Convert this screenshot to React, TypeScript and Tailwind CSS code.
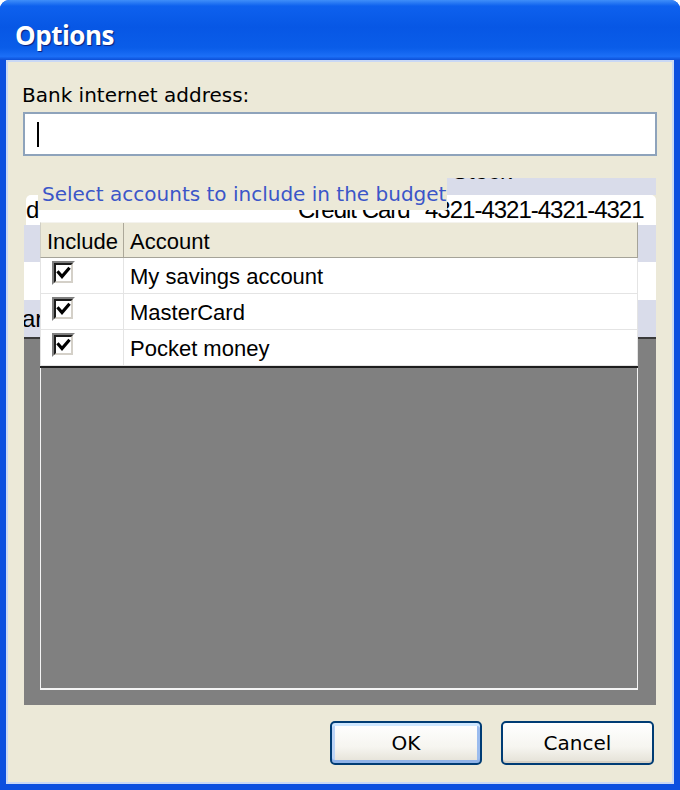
const ui = "font-['DejaVu_Sans',Verdana,sans-serif]";
const cell = "font-['Liberation_Sans',Arial,sans-serif]";

function Check() {
  return (
    <span className="flex h-[24px] w-[23px] border-2 border-t-[#808080] border-l-[#808080] border-b-white border-r-white">
      <span className="flex flex-1 bg-white border-2 border-t-[#1c1c1c] border-l-[#1c1c1c] border-b-[#d4d0c8] border-r-[#d4d0c8]">
        <svg viewBox="0 0 15 16" className="h-full w-full" aria-hidden>
          <path d="M2.5 7.5 L6 11.5 L12.5 4" fill="none" stroke="#000" strokeWidth="3.2" strokeLinecap="square" />
        </svg>
      </span>
    </span>
  );
}

const accounts = ["My savings account", "MasterCard", "Pocket money"];

export default function App() {
  return (
    <div className="flex h-[790px] w-[680px] flex-col overflow-hidden rounded-t-[9px] bg-[#0c4fdf]">
      {/* Title bar */}
      <div className="h-[60px] shrink-0 bg-[linear-gradient(180deg,#3f8ef9_0%,#0e61ee_10%,#0757e5_45%,#0a5de9_80%,#1c6ff7_94%,#0c4fd8_100%)] pl-[15px] pt-[17px]">
        <div className="font-['Open_Sans',sans-serif] text-[26px] font-bold leading-[36px] tracking-[-0.5px] text-white [text-shadow:1px_1px_1px_#0a1f7a]">
          Options
        </div>
      </div>

      {/* Client area */}
      <div className={`mx-[6px] mb-[6px] flex flex-1 flex-col border-2 border-[#c9d8f5] bg-[#ece9d8] ${ui}`}>
        <div className="pl-[14px] pt-[21px] text-[20px] leading-[24px] text-black">Bank internet address:</div>
        <div className="mx-[15px] mt-[5px] h-[44px] border-2 border-[#8ea3bb] bg-white pl-[12px] pt-[8px]">
          <div className="h-[25px] w-[2px] bg-black" />
        </div>

        {/* Account grid area */}
        <div className={`relative mx-[16px] mt-[22px] h-[527px] ${cell}`}>
          {/* grid behind */}
          <div className="flex h-full flex-col text-black">
            <div className="ml-[14px] h-[17px] overflow-hidden bg-[#d9dcea]">
              <div className="-mt-[20px] pl-[414px] text-[24px] leading-[26px]">Stock</div>
            </div>
            <div className="ml-[2px] flex h-[30px] overflow-hidden rounded-t-[5px] bg-white pt-[1px] text-[24px] leading-[28px] tracking-[-1px]">
              <span className="w-[272px] shrink-0">d</span>
              <span className="w-[127px] shrink-0">Credit Card</span>
              <span className="whitespace-nowrap">4321-4321-4321-4321</span>
            </div>
            <div className="h-[37px] bg-[#d9dcea]" />
            <div className="h-[38px] bg-white" />
            <div className="h-[37px] overflow-hidden bg-[#d9dcea] pt-[6px] text-[24px] leading-[26px]">
              <span className="-ml-[2px]">ar</span>
            </div>
            <div className="flex-1 border-t-2 border-[#3a3a3a] bg-[#808080]" />
          </div>

          {/* group label over it */}
          <div className={`absolute left-[14px] top-0 h-[32px] w-[409px] bg-[#ece9d8] pl-[4px] text-[20px] leading-[32px] text-[#3b56c8] ${ui}`}>
            Select accounts to include in the budget
          </div>

          {/* budget grid */}
          <div className="absolute left-[16px] top-[44px] flex h-[468px] w-[598px] flex-col text-[22px] text-black">
            <div className="flex h-[36px] border border-b-[#a5a398] border-l-[#d0cfc6] border-r-[#a5a398] border-t-[#f4f3ee] bg-[#ece9d8] leading-[38px]">
              <div className="w-[83px] shrink-0 border-r border-[#aca899] pl-[6px]">Include</div>
              <div className="pl-[6px]">Account</div>
            </div>
            {accounts.map((name) => (
              <div key={name} className="flex h-[36px] border-b border-x border-[#e4e4e4] bg-white">
                <div className="flex w-[83px] shrink-0 items-center border-r border-[#e4e4e4] pb-[5px] pl-[11px]">
                  <Check />
                </div>
                <div className="pl-[6px] leading-[38px]">{name}</div>
              </div>
            ))}
            <div className="h-[2px] bg-[#1e1e1e]" />
            <div className="flex-1 border-x border-b-2 border-[#f4f4f4] bg-[#808080]" />
          </div>
        </div>

        {/* Buttons */}
        <div className="mt-[16px] flex justify-end gap-[19px] pr-[18px]">
          <button className="h-[44px] w-[152px] rounded-[5px] border-2 border-[#003c74] bg-[linear-gradient(180deg,#ffffff_0%,#f6f5f0_60%,#e4e1d6_100%)] text-[20px] text-black shadow-[inset_0_3px_0_#cee7ff,inset_0_-3px_0_#8fb2e8,inset_3px_0_0_#bcd4f6,inset_-3px_0_0_#9bbcee]">
            OK
          </button>
          <button className="h-[44px] w-[153px] rounded-[5px] border-2 border-[#003c74] bg-[linear-gradient(180deg,#ffffff_0%,#f6f5f0_60%,#e4e1d6_100%)] text-[20px] text-black shadow-[inset_0_-2px_0_#d6d0c5]">
            Cancel
          </button>
        </div>
      </div>
    </div>
  );
}
